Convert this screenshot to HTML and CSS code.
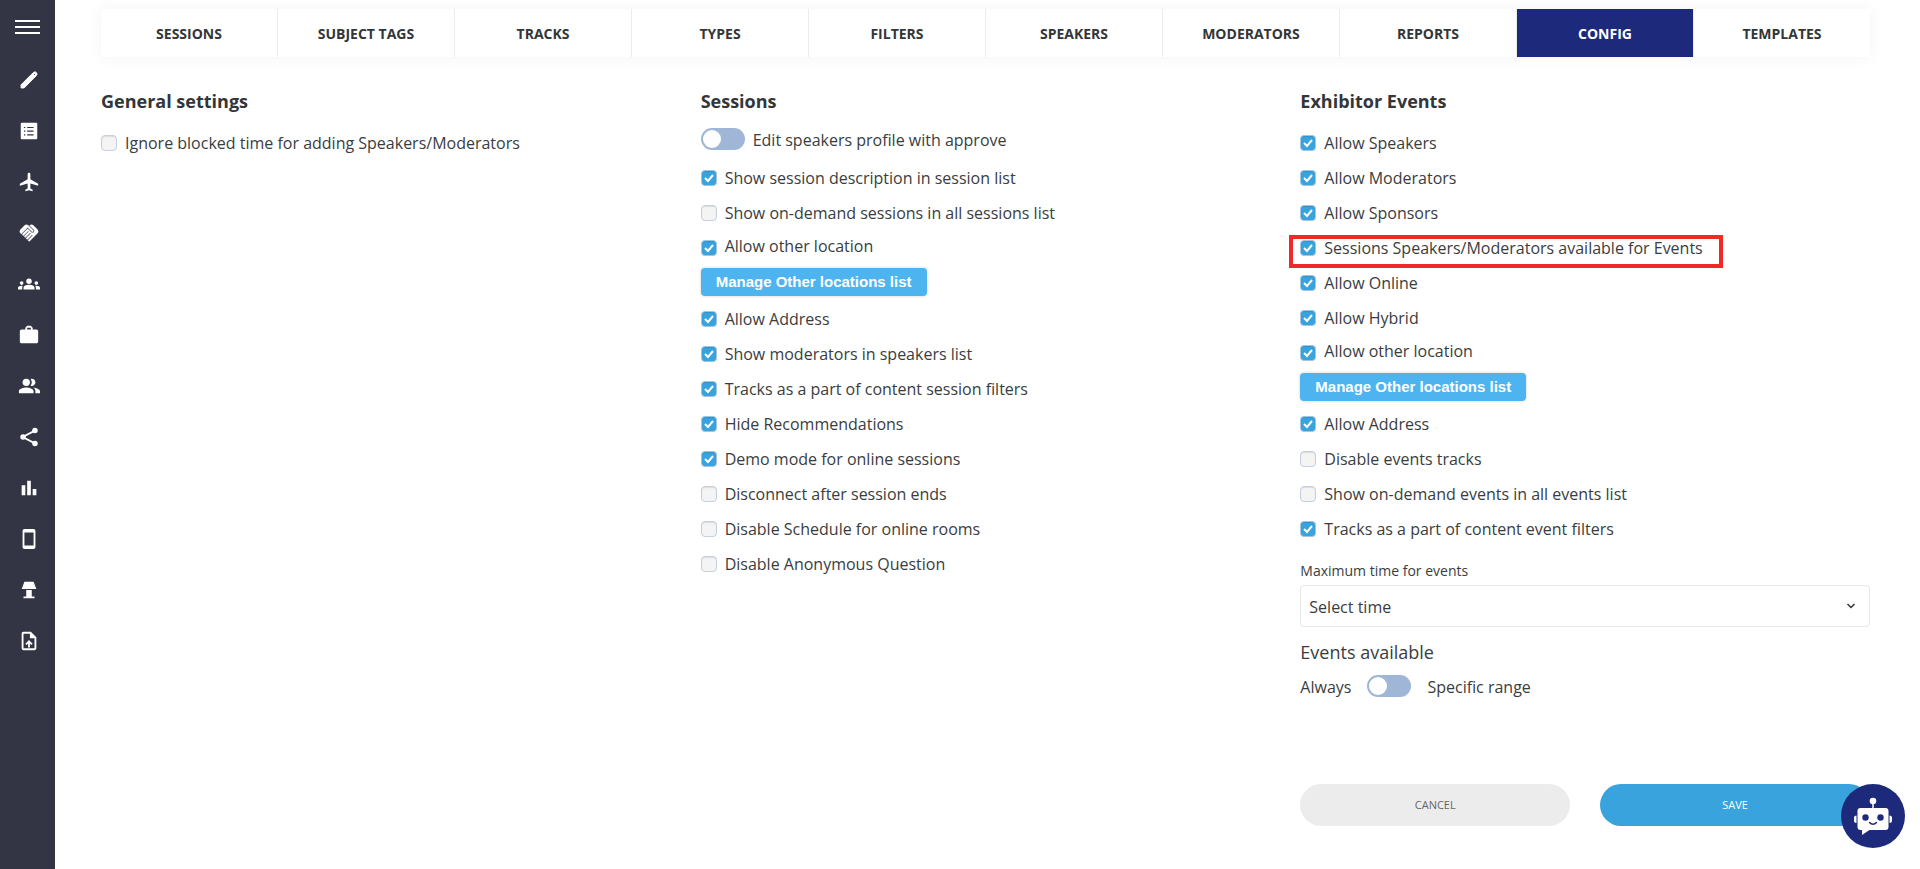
FILE: index.html
```html
<!DOCTYPE html>
<html lang="en">
<head>
<meta charset="utf-8">
<meta name="viewport" content="width=device-width, initial-scale=1">
<title>Sessions config</title>
<link rel="stylesheet" href="styles.css">
</head>
<body class="app">
<aside class="sidebar">
  <button class="menu-button" type="button" aria-label="Menu"><span class="menu-line"></span><span class="menu-line"></span><span class="menu-line"></span></button>
  <nav class="side-nav" aria-label="Main">
    <a class="side-link" href="#" aria-label="Edit"><svg class="side-icon" viewBox="0 0 24 24"><path d="M3.3 17.3 16.7 3.9c1-1 2.400-1 3.300 0s1 2.400 0 3.400L6.700 20.700H3.300z" stroke="#fff" stroke-linejoin="round"/><path d="m17.500 5.500 1 1" stroke="#333545"/></svg></a>
    <a class="side-link" href="#" aria-label="List"><svg class="side-icon" viewBox="0 0 24 24"><path fill-rule="evenodd" d="M4 3h16a1 1 0 0 1 1 1v16a1 1 0 0 1-1 1H4a1 1 0 0 1-1-1V4a1 1 0 0 1 1-1zm2.500 4.500v1.300h1.500V7.500zm3.500 0v1.300h7V7.500zm-3.500 4v1.300h1.500v-1.300zm3.500 0v1.300h7v-1.300zm-3.500 4v1.300h1.500v-1.300zm3.500 0v1.300h7v-1.300z"/></svg></a>
    <a class="side-link" href="#" aria-label="Travel"><svg class="side-icon" viewBox="0 0 24 24"><path d="M22 16v-2l-8.500-5V3.500C13.500 2.670 12.830 2 12 2s-1.500.67-1.500 1.500V9L2 14v2l8.500-2.500V19L8 20.500V22l4-1 4 1v-1.500L13.500 19v-5.500z"/></svg></a>
    <a class="side-link" href="#" aria-label="Partners"><svg class="side-icon" viewBox="0 0 24 24"><path stroke="#fff" stroke-width=".4" d="M16.480 10.410c-.39.39-1.040.39-1.430 0l-4.470-4.460-7.050 7.040-.66-.63c-1.170-1.170-1.170-3.070 0-4.240l4.240-4.240c1.170-1.170 3.070-1.170 4.240 0L16.480 9c.39.39.39 1.020 0 1.410zm.7-2.120c.78.78.78 2.050 0 2.830-1.270 1.270-2.610.22-2.830 0l-3.760-3.760-5.570 5.570c-.39.39-.39 1.020 0 1.410s1.020.39 1.420 0l4.620-4.620.71.71-4.620 4.620c-.39.39-.39 1.020 0 1.410s1.020.39 1.420 0l4.620-4.620.71.71-4.620 4.620c-.39.39-.39 1.020 0 1.410s1.020.39 1.410 0l4.620-4.620.71.71-4.620 4.620c-.39.39-.39 1.020 0 1.410s1.020.39 1.410 0l8.320-8.340c1.170-1.170 1.170-3.070 0-4.240l-4.240-4.240c-1.150-1.150-3.010-1.170-4.180-.06z"/></svg></a>
    <a class="side-link" href="#" aria-label="Groups"><svg class="side-icon" viewBox="0 0 24 24"><path d="M12 12.750c1.630 0 3.070.39 4.240.9 1.080.48 1.760 1.560 1.760 2.730V18H6v-1.610c0-1.180.68-2.260 1.760-2.730 1.170-.52 2.610-.91 4.240-.91zM5.130 14.100C4.760 14.040 4.390 14 4 14c-.99 0-1.930.21-2.780.58C.48 14.900 0 15.620 0 16.430V18h4.500v-1.610c0-.83.23-1.610.63-2.290zM24 16.430c0-.81-.48-1.530-1.220-1.850C21.930 14.210 20.990 14 20 14c-.39 0-.76.04-1.130.1.4.68.63 1.460.63 2.290V18H24z"/><circle cx="4" cy="11" r="2"/><circle cx="20" cy="11" r="2"/><circle cx="12" cy="9" r="3"/></svg></a>
    <a class="side-link" href="#" aria-label="Business"><svg class="side-icon" viewBox="0 0 24 24"><path fill-rule="evenodd" d="M20 6h-4V4l-2-2h-4L8 4v2H4c-1.100 0-2 .9-2 2v11c0 1.100.9 2 2 2h16c1.100 0 2-.9 2-2V8c0-1.100-.9-2-2-2zm-6 0h-4V4h4z"/></svg></a>
    <a class="side-link" href="#" aria-label="People"><svg class="side-icon" viewBox="0 0 24 24"><circle cx="9" cy="8" r="4"/><path d="M9 13.500c-2.670 0-8 1.340-8 4V20h16v-2.500c0-2.660-5.330-4-8-4zM16.670 13.630C18.040 14.560 19 15.820 19 17.500V20h5v-2.500c0-2.180-4.570-3.470-7.330-3.870zM15 12c2.210 0 4-1.790 4-4s-1.790-4-4-4c-.47 0-.91.1-1.330.24C14.500 5.270 15 6.580 15 8s-.5 2.730-1.330 3.760c.42.14.86.24 1.330.24z"/></svg></a>
    <a class="side-link" href="#" aria-label="Share"><svg class="side-icon" viewBox="0 0 24 24"><path d="M18.500 5 5 12l13.500 7" fill="none" stroke="#fff" stroke-width="2"/><circle cx="18.500" cy="5" r="3"/><circle cx="5.500" cy="12" r="3"/><circle cx="18.500" cy="19" r="3"/></svg></a>
    <a class="side-link" href="#" aria-label="Statistics"><svg class="side-icon" viewBox="0 0 24 24"><path d="M4 9h4v11H4zM10 4h4v16h-4zM16 13h4v7h-4z"/></svg></a>
    <a class="side-link" href="#" aria-label="Mobile"><svg class="side-icon" viewBox="0 0 24 24"><path fill-rule="evenodd" d="M7 1h10a2 2 0 0 1 2 2v18a2 2 0 0 1-2 2H7a2 2 0 0 1-2-2V3a2 2 0 0 1 2-2zm0 4v14h10V5z"/></svg></a>
    <a class="side-link" href="#" aria-label="Stands"><svg class="side-icon" viewBox="0 0 24 24"><path d="M7 3h10l3 8H4zM9 12h6v7h-6zM6 19h12v2H6z"/></svg></a>
    <a class="side-link" href="#" aria-label="Upload"><svg class="side-icon" viewBox="0 0 24 24"><path fill-rule="evenodd" d="M14 2H6c-1.100 0-2 .9-2 2v16c0 1.100.9 2 2 2h12c1.100 0 2-.9 2-2V8zm4 18H6V4h7v5h5zM8 15l1.400 1.400L11 14.800V19h2v-4.200l1.600 1.600L16 15l-4-4z"/></svg></a>
  </nav>
</aside>
<main class="main">
  <nav class="tabs" aria-label="Sections">
    <a class="tab" href="#">SESSIONS</a>
    <a class="tab" href="#">SUBJECT TAGS</a>
    <a class="tab" href="#">TRACKS</a>
    <a class="tab" href="#">TYPES</a>
    <a class="tab" href="#">FILTERS</a>
    <a class="tab" href="#">SPEAKERS</a>
    <a class="tab" href="#">MODERATORS</a>
    <a class="tab" href="#">REPORTS</a>
    <a class="tab tab-active" href="#" aria-current="page">CONFIG</a>
    <a class="tab" href="#">TEMPLATES</a>
  </nav>
  <form class="columns">
    <section class="column">
      <h2 class="heading">General settings</h2>
      <div class="options">
        <label class="option"><input class="check" type="checkbox"><span>Ignore blocked time for adding Speakers/Moderators</span></label>
      </div>
    </section>
    <section class="column">
      <h2 class="heading">Sessions</h2>
      <label class="switch-row"><input class="switch" type="checkbox" role="switch"><span class="switch-text">Edit speakers profile with approve</span></label>
      <div class="options options-after-switch">
        <label class="option"><input class="check" type="checkbox" checked><span>Show session description in session list</span></label>
        <label class="option"><input class="check" type="checkbox"><span>Show on-demand sessions in all sessions list</span></label>
        <label class="option option-with-button"><input class="check" type="checkbox" checked><span class="raised">Allow other location</span></label>
        <button class="manage" type="button">Manage Other locations list</button>
        <label class="option"><input class="check" type="checkbox" checked><span>Allow Address</span></label>
        <label class="option"><input class="check" type="checkbox" checked><span>Show moderators in speakers list</span></label>
        <label class="option"><input class="check" type="checkbox" checked><span>Tracks as a part of content session filters</span></label>
        <label class="option"><input class="check" type="checkbox" checked><span>Hide Recommendations</span></label>
        <label class="option"><input class="check" type="checkbox" checked><span>Demo mode for online sessions</span></label>
        <label class="option"><input class="check" type="checkbox"><span>Disconnect after session ends</span></label>
        <label class="option"><input class="check" type="checkbox"><span>Disable Schedule for online rooms</span></label>
        <label class="option"><input class="check" type="checkbox"><span>Disable Anonymous Question</span></label>
      </div>
    </section>
    <section class="column">
      <h2 class="heading">Exhibitor Events</h2>
      <div class="options">
        <label class="option"><input class="check" type="checkbox" checked><span>Allow Speakers</span></label>
        <label class="option"><input class="check" type="checkbox" checked><span>Allow Moderators</span></label>
        <label class="option"><input class="check" type="checkbox" checked><span>Allow Sponsors</span></label>
        <label class="option option-marked"><input class="check" type="checkbox" checked><span>Sessions Speakers/Moderators available for Events</span></label>
        <label class="option"><input class="check" type="checkbox" checked><span>Allow Online</span></label>
        <label class="option"><input class="check" type="checkbox" checked><span>Allow Hybrid</span></label>
        <label class="option option-with-button"><input class="check" type="checkbox" checked><span class="raised">Allow other location</span></label>
        <button class="manage" type="button">Manage Other locations list</button>
        <label class="option"><input class="check" type="checkbox" checked><span>Allow Address</span></label>
        <label class="option"><input class="check" type="checkbox"><span>Disable events tracks</span></label>
        <label class="option"><input class="check" type="checkbox"><span>Show on-demand events in all events list</span></label>
        <label class="option"><input class="check" type="checkbox" checked><span>Tracks as a part of content event filters</span></label>
      </div>
      <label class="field-label" for="max-time">Maximum time for events</label>
      <div class="select-box">
        <select class="select" id="max-time"><option>Select time</option></select>
        <svg class="chevron" viewBox="0 0 10 10"><path d="m1.500 3 3.500 3.500L8.500 3" fill="none" stroke="#333" stroke-width="1.500"/></svg>
      </div>
      <h3 class="subheading">Events available</h3>
      <div class="range-row">
        <span class="switch-text">Always</span>
        <input class="switch" id="range" type="checkbox" role="switch">
        <label class="switch-text" for="range">Specific range</label>
      </div>
      <div class="actions">
        <button class="action action-cancel" type="button">CANCEL</button>
        <button class="action action-save" type="submit">SAVE</button>
      </div>
    </section>
  </form>
</main>
<button class="chatbot" type="button" aria-label="Chat assistant">
  <svg class="chatbot-icon" viewBox="0 0 40 40"><circle cx="20" cy="5" r="3.300" fill="#fff"/><path d="M20 7v6" stroke="#fff" stroke-width="1.500"/><path d="M7.500 12h25a3 3 0 0 1 3 3v16a3 3 0 0 1-3 3H16.500L9 39v-5H7.500a3 3 0 0 1-3-3V15a3 3 0 0 1 3-3z" fill="#fff"/><path d="M3.500 19.500v7.500C2 27 1 26 1 25v-3.500c0-1 1-2 2.500-2zM36.500 19.500v7.500c1.500 0 2.500-1 2.500-2v-3.500c0-1-1-2-2.500-2z" fill="#fff"/><circle cx="12.500" cy="21.500" r="3.200" fill="#1d2a7c"/><circle cx="27.500" cy="21.500" r="3.200" fill="#1d2a7c"/><path d="M16.500 26.500c2 2.300 5 2.300 7 0" fill="none" stroke="#1d2a7c" stroke-width="1.400" stroke-linecap="round"/></svg>
</button>
</body>
</html>
```
FILE: styles.css
```css
* { box-sizing: border-box; }

.app {
  display: flex;
  min-height: 100vh;
  margin: 0;
  background: #fff;
  color: #3a3d40;
  font-family: "Open Sans", sans-serif;
  font-size: 16px;
  line-height: 20px;
}

.sidebar {
  flex: none;
  width: 55px;
  padding-top: 20px;
  background: #333545;
}

.menu-button {
  display: flex;
  flex-direction: column;
  gap: 4px;
  width: 25px;
  margin: 0 0 20px 15px;
  padding: 0;
  border: 0;
  background: none;
}

.menu-line { width: 25px; height: 2px; background: #fff; }

.side-nav { display: flex; flex-direction: column; padding-left: 3px; }

.side-link {
  display: flex;
  align-items: center;
  justify-content: center;
  height: 51px;
}

.side-icon { width: 22px; height: 22px; fill: #fff; }

.main { flex: 1; min-width: 0; padding: 9px 50px 43px 46px; }

.tabs {
  display: flex;
  margin-bottom: 32px;
  box-shadow: 0 0 15px rgba(0, 0, 0, 0.05);
}

.tab {
  flex: 1 1 0;
  padding-top: 2px;
  border-right: 1px solid #ececec;
  color: #333638;
  font-size: 14px;
  font-weight: 700;
  line-height: 46px;
  text-align: center;
  text-decoration: none;
}

.tab:last-child { border-right: 0; }

.tab-active { background: #1d2a7c; color: #fff; }

.columns {
  display: grid;
  grid-template-columns: repeat(3, minmax(0, 1fr));
  gap: 30px;
}

.heading { margin: 0 0 15px; color: #333638; font-size: 18px; line-height: 24px; font-weight: 700; }

.options {
  display: flex;
  flex-direction: column;
  align-items: flex-start;
  padding-top: 5px;
}

.options-after-switch { padding-top: 0; }

.option {
  position: relative;
  display: flex;
  align-items: center;
  gap: 8px;
  min-height: 20px;
  margin-bottom: 15px;
}

.option-with-button { margin-bottom: 10px; }

.raised { align-self: flex-start; line-height: 16px; }

.option-marked::after {
  content: "";
  position: absolute;
  inset: -3px -20px -10px -11px;
  border: 4px solid #f02828;
  pointer-events: none;
}

.check {
  appearance: none;
  flex: none;
  width: 16px;
  height: 16px;
  margin: 0;
  border: 1px solid #c3d0e4;
  border-radius: 4px;
  background: #f4f4f4;
  box-shadow: inset 0 1px 1px rgba(0, 0, 0, 0.1);
}

.check:checked {
  border-color: #a5c4e2;
  background: #38a3dc url("data:image/svg+xml,%3Csvg xmlns='http://www.w3.org/2000/svg' viewBox='0 0 14 14'%3E%3Cpath d='m3 7 3 3 5-6' fill='none' stroke='white' stroke-width='2'/%3E%3C/svg%3E") center / 14px 14px no-repeat;
}

.switch-row { display: flex; align-items: center; gap: 8px; margin-bottom: 18px; }

.switch-text { padding-top: 2px; }

.switch {
  appearance: none;
  flex: none;
  display: flex;
  align-items: center;
  width: 44px;
  height: 22px;
  margin: 0;
  padding: 2px;
  border-radius: 11px;
  background: #9fb6d7;
}

.switch::before {
  content: "";
  width: 18px;
  height: 18px;
  border-radius: 50%;
  background: #fff;
}

.switch:checked { justify-content: flex-end; }

.manage {
  height: 28px;
  margin: 0 0 13px;
  padding: 0 15px 2px;
  border: 0;
  border-radius: 4px;
  background: #4db4ef;
  box-shadow: 0 0 3px rgba(0, 0, 0, 0.2);
  color: #fff;
  font-family: "Liberation Sans", Arial, sans-serif;
  font-size: 15px;
  font-weight: 700;
}

.field-label { display: block; margin: 7px 0 4px; font-size: 14px; }

.select-box { display: grid; align-items: center; }

.select {
  grid-area: 1 / 1;
  appearance: none;
  width: 100%;
  height: 42px;
  padding: 2px 40px 0 8px;
  border: 1px solid #e4e6e8;
  border-radius: 4px;
  background: #fff;
  color: inherit;
  font: inherit;
}

.chevron {
  grid-area: 1 / 1;
  justify-self: end;
  width: 10px;
  height: 10px;
  margin-right: 14px;
  pointer-events: none;
}

.subheading { margin: 13px 0 11px; font-size: 18px; line-height: 24px; font-weight: 400; }

.range-row { display: flex; align-items: center; gap: 16px; }

.actions { display: grid; grid-template-columns: 1fr 1fr; gap: 30px; margin-top: 87px; }

.action {
  height: 42px;
  padding: 0 16px 2px;
  border: 0;
  border-radius: 21px;
  font-family: inherit;
  font-size: 11px;
}

.action-cancel { background: #ececec; color: #666; }

.action-save { background: #38a3dc; color: #fff; }

.chatbot {
  position: fixed;
  right: 15px;
  bottom: 21px;
  display: flex;
  align-items: center;
  justify-content: center;
  width: 64px;
  height: 64px;
  padding: 0;
  border: 0;
  border-radius: 50%;
  background: #1d2a7c;
}

.chatbot-icon { width: 40px; height: 40px; }
```
